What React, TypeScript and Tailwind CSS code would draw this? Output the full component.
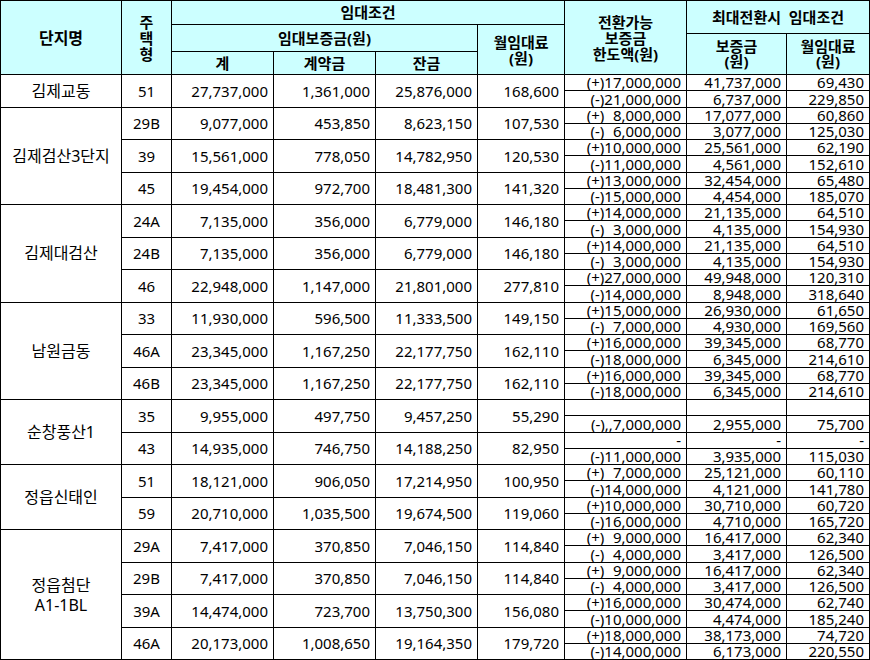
import React from "react";

type Sub = [string, string, string];
type Row = [string, string, string, string, string, Sub, Sub];

interface Group {
  name: string;
  rows: Row[];
}

const groups: Group[] = [
  {
    name: "김제교동",
    rows: [
      ["51", "27,737,000", "1,361,000", "25,876,000", "168,600", ["(+)17,000,000", "41,737,000", "69,430"], ["(-)21,000,000", "6,737,000", "229,850"]],
    ],
  },
  {
    name: "김제검산3단지",
    rows: [
      ["29B", "9,077,000", "453,850", "8,623,150", "107,530", ["(+) 8,000,000", "17,077,000", "60,860"], ["(-) 6,000,000", "3,077,000", "125,030"]],
      ["39", "15,561,000", "778,050", "14,782,950", "120,530", ["(+)10,000,000", "25,561,000", "62,190"], ["(-)11,000,000", "4,561,000", "152,610"]],
      ["45", "19,454,000", "972,700", "18,481,300", "141,320", ["(+)13,000,000", "32,454,000", "65,480"], ["(-)15,000,000", "4,454,000", "185,070"]],
    ],
  },
  {
    name: "김제대검산",
    rows: [
      ["24A", "7,135,000", "356,000", "6,779,000", "146,180", ["(+)14,000,000", "21,135,000", "64,510"], ["(-) 3,000,000", "4,135,000", "154,930"]],
      ["24B", "7,135,000", "356,000", "6,779,000", "146,180", ["(+)14,000,000", "21,135,000", "64,510"], ["(-) 3,000,000", "4,135,000", "154,930"]],
      ["46", "22,948,000", "1,147,000", "21,801,000", "277,810", ["(+)27,000,000", "49,948,000", "120,310"], ["(-)14,000,000", "8,948,000", "318,640"]],
    ],
  },
  {
    name: "남원금동",
    rows: [
      ["33", "11,930,000", "596,500", "11,333,500", "149,150", ["(+)15,000,000", "26,930,000", "61,650"], ["(-) 7,000,000", "4,930,000", "169,560"]],
      ["46A", "23,345,000", "1,167,250", "22,177,750", "162,110", ["(+)16,000,000", "39,345,000", "68,770"], ["(-)18,000,000", "6,345,000", "214,610"]],
      ["46B", "23,345,000", "1,167,250", "22,177,750", "162,110", ["(+)16,000,000", "39,345,000", "68,770"], ["(-)18,000,000", "6,345,000", "214,610"]],
    ],
  },
  {
    name: "순창풍산1",
    rows: [
      ["35", "9,955,000", "497,750", "9,457,250", "55,290", ["", "", ""], ["(-),,7,000,000", "2,955,000", "75,700"]],
      ["43", "14,935,000", "746,750", "14,188,250", "82,950", ["-", "-", "-"], ["(-)11,000,000", "3,935,000", "115,030"]],
    ],
  },
  {
    name: "정읍신태인",
    rows: [
      ["51", "18,121,000", "906,050", "17,214,950", "100,950", ["(+) 7,000,000", "25,121,000", "60,110"], ["(-)14,000,000", "4,121,000", "141,780"]],
      ["59", "20,710,000", "1,035,500", "19,674,500", "119,060", ["(+)10,000,000", "30,710,000", "60,720"], ["(-)16,000,000", "4,710,000", "165,720"]],
    ],
  },
  {
    name: "정읍첨단\nA1-1BL",
    rows: [
      ["29A", "7,417,000", "370,850", "7,046,150", "114,840", ["(+) 9,000,000", "16,417,000", "62,340"], ["(-) 4,000,000", "3,417,000", "126,500"]],
      ["29B", "7,417,000", "370,850", "7,046,150", "114,840", ["(+) 9,000,000", "16,417,000", "62,340"], ["(-) 4,000,000", "3,417,000", "126,500"]],
      ["39A", "14,474,000", "723,700", "13,750,300", "156,080", ["(+)16,000,000", "30,474,000", "62,740"], ["(-)10,000,000", "4,474,000", "185,240"]],
      ["46A", "20,173,000", "1,008,650", "19,164,350", "179,720", ["(+)18,000,000", "38,173,000", "74,720"], ["(-)14,000,000", "6,173,000", "220,550"]],
    ],
  },
];

// full class names only, tailwind can't see built strings
const groupSpan: Record<number, string> = {
  1: "row-span-2",
  2: "row-span-4",
  3: "row-span-6",
  4: "row-span-8",
};

const headBase = "bg-[#ccffff] font-bold flex items-center justify-center text-center";
const head = `${headBase} whitespace-pre-line`;
const num = "bg-white flex items-center justify-end pr-[5px] row-span-2";
const sub = "bg-white flex items-end justify-end pr-[5px] leading-[15px] whitespace-nowrap";

// "(+) 8,000,000" -> keep the digit slot, like the excel number format
const Amount: React.FC<{ text: string }> = ({ text }) => {
  const parts = text.split(" ");
  return (
    <span>
      {parts.map((p, i) => (
        <React.Fragment key={i}>
          {i > 0 && <span className="invisible">0</span>}
          {p}
        </React.Fragment>
      ))}
    </span>
  );
};

export default function App() {
  return (
    <div className="w-[870px] h-[660px] bg-white">
      <div className="grid h-[660px] w-[870px] grid-cols-[120px_49px_101px_101px_101px_86px_121px_99px_82px] grid-rows-[23px_8px_17px_22px_repeat(36,minmax(0,1fr))] gap-px bg-black p-px font-['Noto_Sans','Noto_Sans_CJK_KR',sans-serif] text-[15px] text-black">
        {/* --- header --- */}
        <div className={`${head} col-start-1 row-start-1 row-span-4 text-[16px]`}>단지명</div>
        <div className={`${head} col-start-2 row-start-1 row-span-4 leading-4`}>{"주\n택\n형"}</div>
        <div className={`${head} col-start-3 col-span-4 row-start-1`}>임대조건</div>
        <div className={`${head} col-start-3 col-span-3 row-start-2 row-span-2`}>임대보증금(원)</div>
        <div className={`${head} col-start-6 row-start-2 row-span-3 leading-4`}>{"월임대료\n(원)"}</div>
        <div className={`${head} col-start-3 row-start-4`}>계</div>
        <div className={`${head} col-start-4 row-start-4`}>계약금</div>
        <div className={`${head} col-start-5 row-start-4`}>잔금</div>
        <div className={`${head} col-start-7 row-start-1 row-span-4 leading-4`}>{"전환가능\n보증금\n한도액(원)"}</div>
        <div className={`${headBase} col-start-8 col-span-2 row-start-1 row-span-2 whitespace-pre`}>{"최대전환시  임대조건"}</div>
        <div className={`${head} col-start-8 row-start-3 row-span-2 leading-[15px]`}>{"보증금\n(원)"}</div>
        <div className={`${head} col-start-9 row-start-3 row-span-2 leading-[15px]`}>{"월임대료\n(원)"}</div>

        {/* --- body --- */}
        {groups.map((g) =>
          g.rows.map((r, i) => (
            <React.Fragment key={g.name + r[0]}>
              {i === 0 && (
                <div
                  className={`${groupSpan[g.rows.length]} bg-white flex items-center justify-center text-center whitespace-pre-line text-[16px] leading-5`}
                >
                  {g.name}
                </div>
              )}
              <div className="bg-white flex items-center justify-center row-span-2">{r[0]}</div>
              <div className={num}>{r[1]}</div>
              <div className={num}>{r[2]}</div>
              <div className={num}>{r[3]}</div>
              <div className={num}>{r[4]}</div>
              {r[5].map((t, k) => (
                <div key={"a" + k} className={sub}>
                  <Amount text={t} />
                </div>
              ))}
              {r[6].map((t, k) => (
                <div key={"b" + k} className={sub}>
                  <Amount text={t} />
                </div>
              ))}
            </React.Fragment>
          ))
        )}
      </div>
    </div>
  );
}
